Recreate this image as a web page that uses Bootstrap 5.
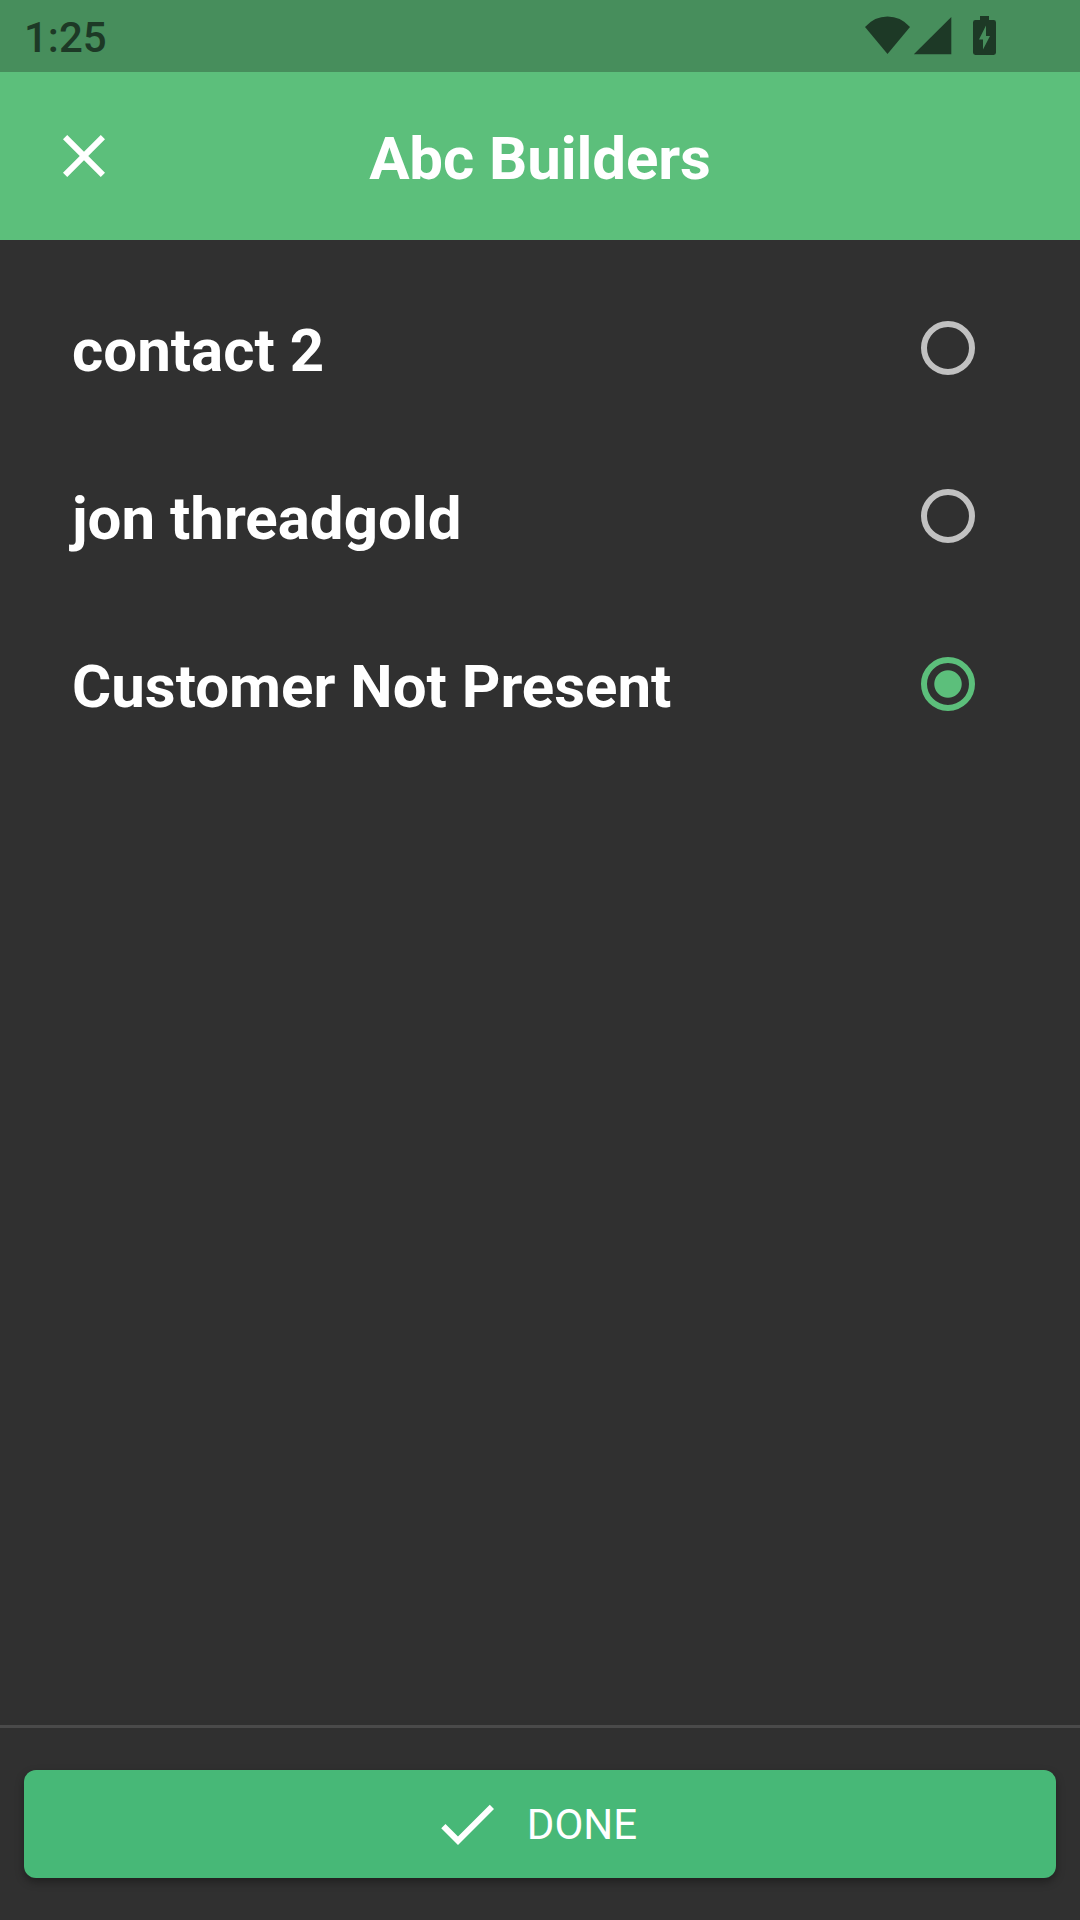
<!DOCTYPE html>
<html lang="en" data-bs-theme="dark">
<head>
<meta charset="utf-8">
<meta name="viewport" content="width=device-width, initial-scale=1">
<title>Abc Builders</title>
<link href="https://cdn.jsdelivr.net/npm/bootstrap@5.3.0/dist/css/bootstrap.min.css" rel="stylesheet">
<style>
  body { font-family: Roboto, "Liberation Sans", sans-serif; background: #303030; color: #fff; }
  svg { display: block; flex: none; }
  .screen { height: 1920px; max-height: 100vh; overflow: hidden; }
  .status-bar { height: 72px; background: #478e5c; color: #1d3926; padding: 0 83px 0 24px; }
  .clock { font-size: 42px; font-weight: 500; line-height: 1; padding-top: 4px; }
  .app-bar { height: 168px; background: #5cbf7b; padding: 0 48px; }
  .app-bar .side { width: 72px; }
  .app-bar h1 { font-size: 60px; font-weight: 700; letter-spacing: -.1px; line-height: 72px; padding-top: 5px; }
  .contacts { padding-top: 24px; }
  .contact { height: 168px; padding: 0 105px 0 72px; }
  .contact label { font-size: 60px; font-weight: 700; line-height: 72px; padding-top: 5px; }
  .radio { appearance: none; width: 54px; height: 54px; margin: 0; border: 6px solid #c1c1c1; border-radius: 50%; background: none; }
  .radio:checked { border-color: #5cbf7b; background: radial-gradient(circle, #5cbf7b 13.2px, transparent 14.2px) border-box; }
  .action-bar { height: 195px; border-top: 3px solid #4a4a4a; padding: 42px 24px; }
  .btn-done { --bs-btn-color: #fff; --bs-btn-bg: #47b877; --bs-btn-border-width: 0; --bs-btn-hover-color: #fff; --bs-btn-hover-bg: #40aa6d;
    --bs-btn-border-radius: 12px; height: 108px; font-size: 42px; line-height: 50px; gap: 24px; box-shadow: 0 4px 8px rgba(0,0,0,.34); }
  .btn-done span { padding: 2px 12px 0 0; }
</style>
</head>
<body>
<div class="screen d-flex flex-column">
  <div class="status-bar d-flex justify-content-between align-items-center">
    <span class="clock">1:25</span>
    <!-- wifi, signal, charging battery -->
    <svg width="133" height="42" viewBox="864 15 133 42" fill="currentColor" role="img" aria-label="Wifi, signal, battery charging">
      <path d="M887.5 54 865 27Q874.5 16.6 887.5 16.6T910 27Z"/>
      <path d="M913.800 54.2 951.300 17v37.2Z"/>
      <path fill-rule="evenodd" d="M980 16h9v4h4.600q2.400 0 2.400 2.400v30.200q0 2.400-2.400 2.400h-18.200q-2.400 0-2.400-2.400V22.400q0-2.400 2.400-2.400H980ZM986 25.500 979 39.500h4V49.500l7-13.600h-4Z"/>
    </svg>
  </div>
  <header class="app-bar d-flex align-items-center justify-content-between">
    <div class="side">
      <svg width="72" height="72" viewBox="0 0 24 24" fill="#fff" role="img" aria-label="Close"><path d="M19 6.410 17.590 5 12 10.590 6.410 5 5 6.410 10.590 12 5 17.590 6.410 19 12 13.410 17.590 19 19 17.590 13.410 12z"/></svg>
    </div>
    <h1 class="m-0">Abc Builders</h1>
    <div class="side"></div>
  </header>
  <main class="contacts flex-grow-1">
    <div class="contact d-flex align-items-center justify-content-between">
      <label for="c1">contact 2</label><input class="radio" type="radio" name="contact" id="c1">
    </div>
    <div class="contact d-flex align-items-center justify-content-between">
      <label for="c2">jon threadgold</label><input class="radio" type="radio" name="contact" id="c2">
    </div>
    <div class="contact d-flex align-items-center justify-content-between">
      <label for="c3">Customer Not Present</label><input class="radio" type="radio" name="contact" id="c3" checked>
    </div>
  </main>
  <footer class="action-bar">
    <button type="button" class="btn btn-done w-100 p-0 d-flex align-items-center justify-content-center">
      <svg width="72" height="72" viewBox="0 0 24 24" fill="#fff" aria-hidden="true"><path d="M9 16.170 4.830 12l-1.420 1.410L9 19 21 7l-1.410-1.410z"/></svg>
      <span>DONE</span>
    </button>
  </footer>
</div>
<script src="https://cdn.jsdelivr.net/npm/bootstrap@5.3.0/dist/js/bootstrap.bundle.min.js"></script>
</body>
</html>
